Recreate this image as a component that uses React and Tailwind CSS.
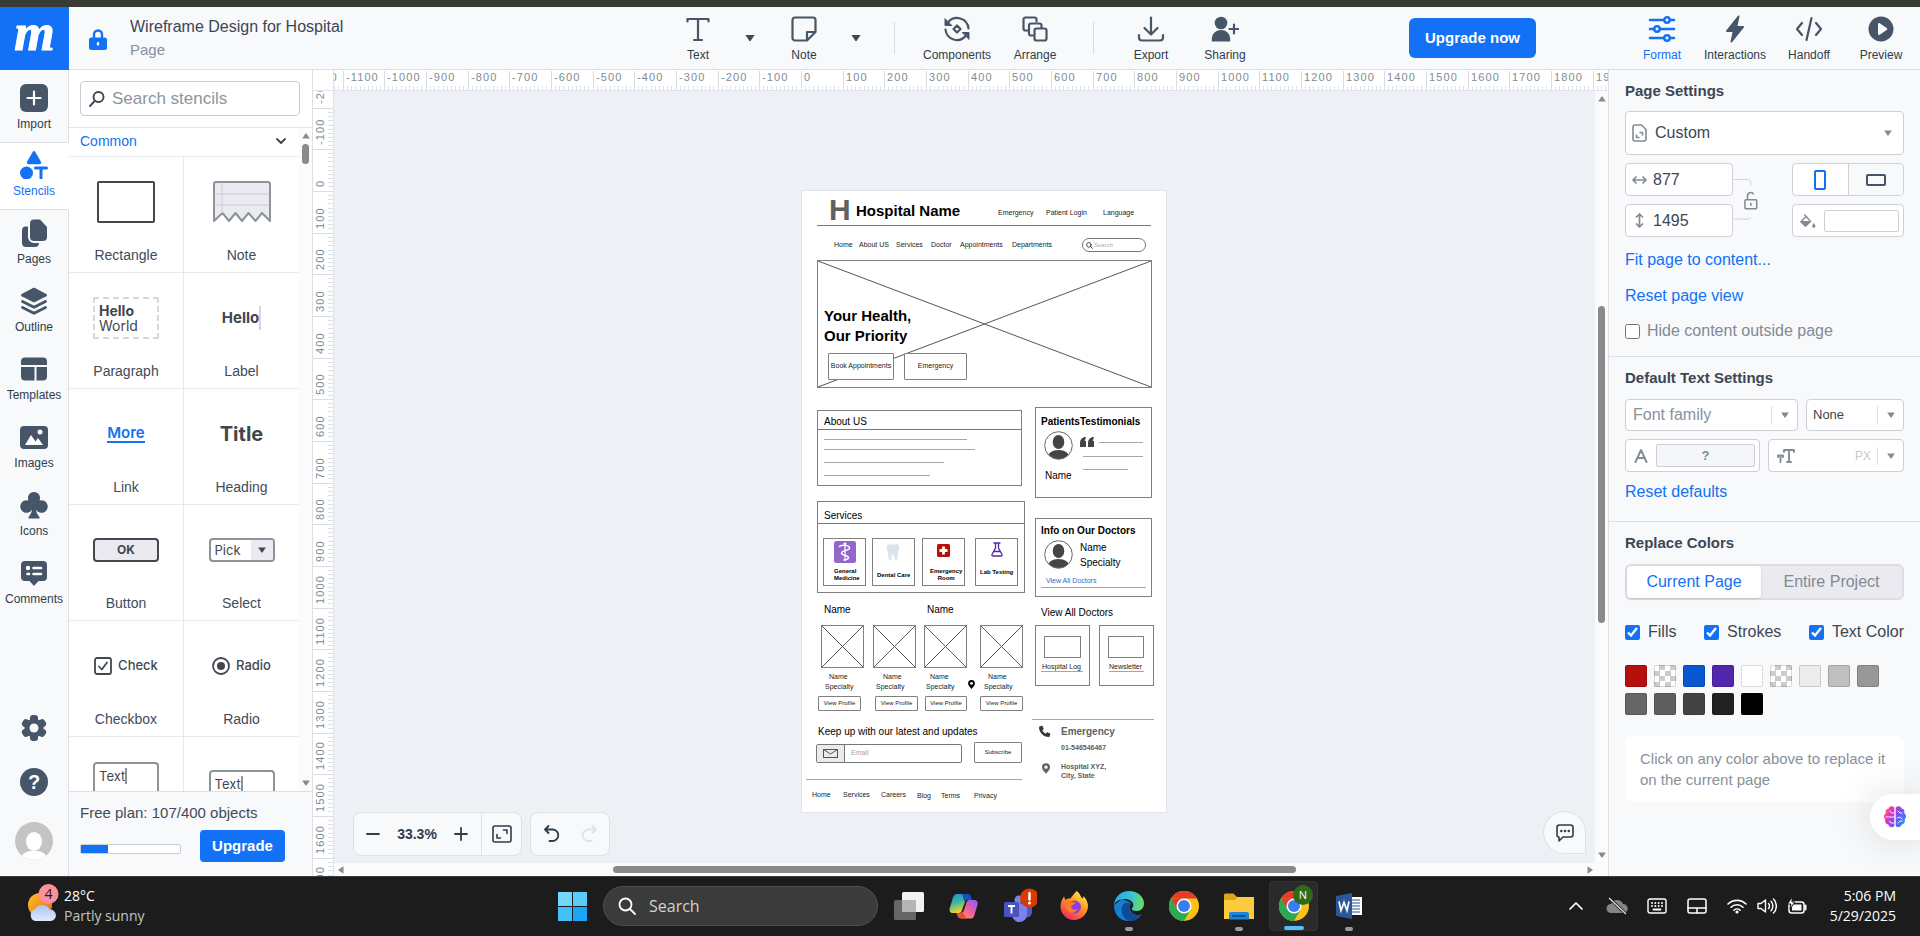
import React from "react";

/* ---------- small icon set ---------- */

const Caret = ({ className = "w-3 h-2 text-[#3f4a58]" }) => (
  <svg viewBox="0 0 12 8" className={className} fill="currentColor" aria-hidden="true">
    <path d="M1.4 1h9.2L6.7 6.8a.8.8 0 0 1-1.4 0z" />
  </svg>
);

const Stroke = ({ children, className = "w-7 h-7", w = 2.2, box = "0 0 28 28" }) => (
  <svg viewBox={box} className={className} fill="none" stroke="currentColor" strokeWidth={w} strokeLinecap="round" strokeLinejoin="round" aria-hidden="true">
    {children}
  </svg>
);

const Solid = ({ children, className = "w-7 h-7", box = "0 0 28 28" }) => (
  <svg viewBox={box} className={className} fill="currentColor" aria-hidden="true">
    {children}
  </svg>
);

const TextIcon = () => (
  <Stroke><path d="M3.5 6.5V4h21v2.500M14 4v21M10 25h8" /></Stroke>
);
const NoteIcon = () => (
  <Stroke><path d="M2.500 5a2.500 2.500 0 0 1 2.500-2.500h18A2.500 2.500 0 0 1 25.500 5v12l-8.500 8.500H5A2.500 2.500 0 0 1 2.500 23zM25.500 17H17v8.500" /></Stroke>
);
const ComponentsIcon = () => (
  <Stroke>
    <path d="M5 7.500A11.500 11.500 0 0 1 25.500 13.500M23 20.500A11.500 11.500 0 0 1 2.500 14.500" />
    <path d="M2 4v6.500h6.500zM26 24v-6.500h-6.500z" fill="currentColor" strokeWidth="1" />
    <path d="m14 10.500 3.500 3.500-3.500 3.500-3.500-3.500z" />
  </Stroke>
);
const ArrangeIcon = () => (
  <Stroke>
    <path d="M6.500 15.500h-2a2 2 0 0 1-2-2v-9a2 2 0 0 1 2-2h9a2 2 0 0 1 2 2v2" />
    <path d="M12 20.500h-2a2 2 0 0 1-2-2v-8a2 2 0 0 1 2-2h8.500a2 2 0 0 1 2 2v2" />
    <rect x="13.500" y="13.500" width="12" height="12" rx="2" />
  </Stroke>
);
const ExportIcon = () => (
  <Stroke><path d="M14 2.500V19M7.500 13l6.500 6.500 6.500-6.500M2 20v2.500a3 3 0 0 0 3 3h18a3 3 0 0 0 3-3V20" /></Stroke>
);
const SharingIcon = () => (
  <svg viewBox="0 0 28 28" className="w-7 h-7" aria-hidden="true">
    <circle cx="10" cy="8" r="6.300" fill="currentColor" />
    <path d="M.800 26.500v-3a9.200 8.500 0 0 1 18.400 0v3z" fill="currentColor" />
    <path d="M23 9.500v9M18.500 14h9" stroke="currentColor" strokeWidth="2.200" strokeLinecap="round" />
  </svg>
);
const FormatIcon = () => (
  <svg viewBox="0 0 28 28" className="w-7 h-7" fill="#fff" stroke="currentColor" strokeWidth="2.500" strokeLinecap="round" aria-hidden="true">
    <path d="M2 5h24M2 14h24M2 23h24" />
    <circle cx="19" cy="5" r="2.700" /><circle cx="9" cy="14" r="2.700" /><circle cx="19" cy="23" r="2.700" />
  </svg>
);
const BoltIcon = () => (
  <Solid><path d="M16.800 1 5.200 15.600c-.5.700-.1 1.400.7 1.400h5.600L9.600 26.400c-.2 1.100.900 1.500 1.600.6l11.600-14.600c.5-.7.100-1.400-.7-1.400h-5.600l2-9.400c.2-1.100-.9-1.500-1.700-.6z" /></Solid>
);
const CodeIcon = () => (
  <Stroke><path d="m7 8-5 6 5 6M21 8l5 6-5 6M16.500 3l-5 22" /></Stroke>
);
const PlayIcon = () => (
  <Solid><path fillRule="evenodd" d="M14 1.500a12.500 12.500 0 1 0 0 25 12.500 12.500 0 0 0 0-25zM11 9.200c0-.9 1-1.400 1.700-.9l7 4.800c.7.500.7 1.300 0 1.800l-7 4.800c-.7.500-1.700 0-1.700-.9z" /></Solid>
);

const ImportIcon = () => (
  <svg viewBox="0 0 28 28" className="w-7 h-7" aria-hidden="true">
    <rect width="28" height="28" rx="6" fill="currentColor" />
    <path d="M14 7.500v13M7.500 14h13" stroke="#fff" strokeWidth="2.200" strokeLinecap="round" />
  </svg>
);
const StencilsIcon = () => (
  <Solid>
    <path d="M12.800.8 7.200 10.600c-.8 1.500-.1 2.600 1.300 2.600h11c1.400 0 2.100-1.100 1.300-2.600L15.200.8c-.6-1-1.800-1-2.400 0z" />
    <circle cx="6.500" cy="22" r="6.500" />
    <path d="M15.500 15.500h11a1.400 1.400 0 0 1 0 3h-4v8.500a1.500 1.500 0 0 1-3 0v-8.500h-4a1.400 1.400 0 0 1 0-3z" />
  </Solid>
);
const PagesIcon = () => (
  <Solid>
    <path d="M14 .5h6L27 8v10a4 4 0 0 1-4 4h-9a4 4 0 0 1-4-4V4.500a4 4 0 0 1 4-4z" />
    <path d="M8 7.500H6a4 4 0 0 0-4 4V24a4 4 0 0 0 4 4h9a4 4 0 0 0 4-4h-5a6 6 0 0 1-6-6z" />
  </Solid>
);
const OutlineIcon = () => (
  <svg viewBox="0 0 28 28" className="w-7 h-7" fill="currentColor" aria-hidden="true">
    <path d="M13 1 1.700 7c-.9.500-.9 1.800 0 2.300L13 15c.7.300 1.300.300 2 0l11.300-5.700c.9-.5.900-1.800 0-2.300L15 1c-.7-.3-1.300-.3-2 0z" />
    <path d="M2.500 14.500 14 20.300l11.500-5.800M2.500 20.500 14 26.300l11.500-5.800" fill="none" stroke="currentColor" strokeWidth="2.800" strokeLinecap="round" strokeLinejoin="round" />
  </svg>
);
const TemplatesIcon = () => (
  <Solid>
    <path d="M5 2.500h18a4 4 0 0 1 4 4V10H1V6.500a4 4 0 0 1 4-4z" />
    <path d="M1 12h13.500v13.500H5a4 4 0 0 1-4-4zM16.500 12H27v9.500a4 4 0 0 1-4 4h-6.500z" />
  </Solid>
);
const ImagesIcon = () => (
  <svg viewBox="0 0 28 28" className="w-7 h-7" aria-hidden="true">
    <rect y="3" width="28" height="23" rx="4" fill="currentColor" />
    <path d="M5 22 11 12l4.500 6.500 2.500-3.500L23 22z" fill="#fff" />
    <circle cx="20" cy="9" r="2.500" fill="#fff" />
  </svg>
);
const ClubIcon = () => (
  <Solid>
    <path d="M14 1a6 6 0 0 1 5.500 8.500A6.300 6.300 0 1 1 16 18.700c.400 3 1.800 5.300 3.500 7.600.4.600.1 1.200-.6 1.200H9.100c-.7 0-1-.6-.6-1.200 1.700-2.300 3.100-4.600 3.500-7.600A6.300 6.300 0 1 1 8.500 9.500 6 6 0 0 1 14 1z" />
  </Solid>
);
const CommentsIcon = () => (
  <svg viewBox="0 0 28 28" className="w-7 h-7" aria-hidden="true">
    <path d="M5 2h18a4 4 0 0 1 4 4v12a4 4 0 0 1-4 4h-4.500L14 27l-4.500-5H5a4 4 0 0 1-4-4V6a4 4 0 0 1 4-4z" fill="currentColor" />
    <circle cx="8" cy="9" r="2.200" fill="#fff" />
    <path d="M13.500 9H21M13.500 15H21M7.500 15h1.500" stroke="#fff" strokeWidth="2.600" strokeLinecap="round" />
  </svg>
);

/* ---------- header ---------- */

const Tool = ({ icon, label, width, active }) => (
  <button className={`${width} flex flex-col items-center gap-1 pt-2 ${active ? "text-[#1271f5]" : "text-[#465567]"}`}>
    {icon}
    <span className={`text-xs leading-4 ${active ? "" : "text-[#303c4b]"}`}>{label}</span>
  </button>
);

const Header = () => (
  <header className="flex h-[63px] shrink-0 border-b border-[#dcdfe5] bg-[#f7f9fb]">
    <div className="flex w-[664px] shrink-0">
      <a href="#home" aria-label="Home" className="flex h-[63px] w-[69px] items-center justify-center bg-[#1271f5] pb-3 text-white">
        <span className="font-['Liberation_Serif',serif] text-[52px] font-bold italic leading-none [-webkit-text-stroke:1px_white]">m</span>
      </a>
      <button aria-label="Locked" className="ml-5 mt-1 flex items-center text-[#1271f5]">
        <svg viewBox="0 0 18 22" className="h-[22px] w-[18px]" aria-hidden="true">
          <path d="M5 9V5.500a4 4 0 0 1 8 0V9" fill="none" stroke="currentColor" strokeWidth="2.400" />
          <rect y="8.500" width="18" height="12.500" rx="2.500" fill="currentColor" />
          <rect x="7.800" y="13" width="2.400" height="3.600" rx="1" fill="#fff" />
        </svg>
      </button>
      <div className="ml-[23px] flex flex-col pt-[10px]">
        <h1 className="text-base leading-5 text-[#3d4653]">Wireframe Design for Hospital</h1>
        <p className="mt-[3px] text-[15px] leading-5 text-[#87919c]">Page</p>
      </div>
    </div>
    <nav className="flex shrink-0">
      <Tool icon={<TextIcon />} label="Text" width="w-[68px]" />
      <button aria-label="Text options" className="flex w-9 items-center justify-center"><Caret /></button>
      <Tool icon={<NoteIcon />} label="Note" width="w-[72px]" />
      <button aria-label="Note options" className="flex w-8 items-center justify-center"><Caret /></button>
      <div className="flex w-11 items-center justify-center"><span className="h-8 w-px bg-[#dadde3]" /></div>
      <Tool icon={<ComponentsIcon />} label="Components" width="w-[82px]" />
      <Tool icon={<ArrangeIcon />} label="Arrange" width="w-[74px]" />
      <div className="flex w-[42px] items-center justify-center"><span className="h-8 w-px bg-[#dadde3]" /></div>
      <Tool icon={<ExportIcon />} label="Export" width="w-[74px]" />
      <Tool icon={<SharingIcon />} label="Sharing" width="w-[74px]" />
    </nav>
    <div className="ml-auto flex shrink-0 pr-1">
      <button className="mr-[90px] mt-[11px] h-10 w-[127px] rounded-md bg-[#1271f5] text-[15px] font-bold text-white">Upgrade now</button>
      <Tool icon={<FormatIcon />} label="Format" width="w-[72px]" active />
      <Tool icon={<BoltIcon />} label="Interactions" width="w-[74px]" />
      <Tool icon={<CodeIcon />} label="Handoff" width="w-[74px]" />
      <Tool icon={<PlayIcon />} label="Preview" width="w-[70px]" />
    </div>
  </header>
);

/* ---------- left navigation ---------- */

const navItems = [
  ["Pages", <PagesIcon />],
  ["Outline", <OutlineIcon />],
  ["Templates", <TemplatesIcon />],
  ["Images", <ImagesIcon />],
  ["Icons", <ClubIcon />],
  ["Comments", <CommentsIcon />],
];

const LeftNav = () => (
  <nav className="flex w-[69px] shrink-0 flex-col bg-[#f7f9fb] text-[#465567]">
    <button className="flex h-[73px] flex-col items-center gap-1 border-b border-r border-[#dcdfe5] pt-[14px]">
      <ImportIcon />
      <span className="text-xs leading-4 text-[#303c4b]">Import</span>
    </button>
    <button className="flex h-[67px] flex-col items-center gap-1 border-b border-r border-b-[#dcdfe5] border-r-white bg-white pt-2 text-[#1271f5]">
      <StencilsIcon />
      <span className="text-xs leading-4">Stencils</span>
    </button>
    <div className="flex flex-1 flex-col border-r border-[#dcdfe5]">
      {navItems.map(([label, icon]) => (
        <button key={label} className="flex h-[68px] flex-col items-center gap-1 pt-[9px]">
          {icon}
          <span className="text-xs leading-4 text-[#303c4b]">{label}</span>
        </button>
      ))}
      <div className="mt-auto flex flex-col items-center gap-[26px] pb-4">
        <button aria-label="Settings">
          <svg viewBox="0 0 26 28" className="h-7 w-[26px]" aria-hidden="true">
            <g fill="currentColor">
              <rect x="9" y="1" width="8" height="26" rx="3" />
              <rect x="9" y="1" width="8" height="26" rx="3" transform="rotate(60 13 14)" />
              <rect x="9" y="1" width="8" height="26" rx="3" transform="rotate(120 13 14)" />
              <circle cx="13" cy="14" r="9.500" />
            </g>
            <circle cx="13" cy="14" r="4.500" fill="#f7f9fb" />
          </svg>
        </button>
        <button aria-label="Help" className="flex h-7 w-7 items-center justify-center rounded-full bg-[#465567] text-xl font-bold leading-none text-white">?</button>
        <button aria-label="Account">
          <svg viewBox="0 0 38 38" className="h-[38px] w-[38px]" aria-hidden="true">
            <clipPath id="acc"><circle cx="19" cy="19" r="19" /></clipPath>
            <g clipPath="url(#acc)">
              <rect width="38" height="38" fill="#c4c4c4" />
              <ellipse cx="19" cy="19.500" rx="8" ry="9.500" fill="#fff" />
              <path d="M5 38c2-7 7-9 11-9h6c4 0 9 2 11 9z" fill="#fff" />
            </g>
          </svg>
        </button>
      </div>
    </div>
  </nav>
);

/* ---------- stencil panel ---------- */

const ui = "font-['Inter',sans-serif] text-[#42474e]";

const stencils = [
  ["Rectangle", <div className="h-[42px] w-[58px] rounded-xs border-2 border-[#45474c]" />],
  ["Note",
    <svg viewBox="0 0 58 42" className="h-[42px] w-[58px]" aria-hidden="true">
      <path d="M1 40V3a2 2 0 0 1 2-2h52a2 2 0 0 1 2 2v37l-8-8-6.500 8-7-8-6.500 8-6.500-8-6.500 8-6.500-8z" fill="#ebeaf0" stroke="#8b949b" strokeWidth="2" strokeLinejoin="round" />
      <path d="M2 13h54M2 24h54M9 2v30" stroke="#d4d6db" strokeWidth="1.500" />
    </svg>],
  ["Paragraph",
    <div className={`${ui} h-[42px] w-[66px] rounded-xs border-2 border-dashed border-[#d6d8de] pl-1 pt-1 text-sm leading-[15px]`}>
      <b className="font-bold">Hello</b><br />World
    </div>],
  ["Label", <div className={`${ui} border-r-2 border-[#d6d8de] text-[15px] font-bold leading-6`}>Hello</div>],
  ["Link", <div className="border-b-2 border-[#1271f5] font-['Inter',sans-serif] text-[15px] font-semibold leading-4 text-[#1271f5]">More</div>],
  ["Heading", <div className={`${ui} text-xl font-bold leading-6`}>Title</div>],
  ["Button", <div className={`${ui} flex h-6 w-[66px] items-center justify-center rounded border-2 border-[#45474c] bg-[#ebeaf0] text-xs font-bold`}>OK</div>],
  ["Select",
    <div className={`${ui} flex h-6 w-[66px] items-stretch overflow-hidden rounded border-2 border-[#8b949b] text-[13px]`}>
      <span className="flex-1 pl-1 leading-5">Pick</span>
      <span className="flex w-[22px] items-center justify-center bg-[#ebeaf0]"><Caret className="h-2 w-[10px] text-[#42474e]" /></span>
    </div>],
  ["Checkbox",
    <div className={`${ui} flex items-center gap-1.5 text-[13px] font-medium`}>
      <Stroke className="h-[18px] w-[18px]" box="0 0 18 18" w={1.8}><rect x="1" y="1" width="16" height="16" rx="2" /><path d="m5 9.500 2.800 3L13 5.500" /></Stroke>Check
    </div>],
  ["Radio",
    <div className={`${ui} flex items-center gap-1.5 text-[13px] font-medium`}>
      <svg viewBox="0 0 18 18" className="h-[18px] w-[18px]" aria-hidden="true"><circle cx="9" cy="9" r="8" fill="none" stroke="currentColor" strokeWidth="1.800" /><circle cx="9" cy="9" r="4" fill="currentColor" /></svg>Radio
    </div>],
];

const textBox = `${ui} w-[66px] rounded-t border-2 border-b-0 border-[#8b949b] pl-1 pt-1 text-[13px] leading-4`;
const typed = "inline-block border-r-2 border-[#8b949b]";

const StencilPanel = () => (
  <aside className="flex w-[244px] shrink-0 flex-col border-r border-[#dcdfe5] bg-white">
    <div className="h-[58px] shrink-0 border-b border-[#e4e6eb] pl-[11px] pr-3 pt-[11px]">
      <label className="flex h-[35px] items-center rounded border border-[#c9cdd3] pl-2">
        <Stroke className="h-4 w-4 shrink-0 text-[#3d4653]" box="0 0 16 16" w={1.9}><circle cx="9.500" cy="6" r="5" /><path d="M5.700 9.800 1 15" /></Stroke>
        <input type="search" aria-label="Search stencils" placeholder="Search stencils" className="ml-[7px] w-full bg-transparent text-[17px] leading-6 outline-none placeholder:text-[#8c959e]" />
      </label>
    </div>
    <div className="flex min-h-0 flex-1 overflow-hidden">
      <div className="flex min-w-0 flex-1 flex-col">
        <button className="flex h-[29px] w-full shrink-0 items-center justify-between border-b border-[#e8e8ee] pb-0.5 pl-[11px] pr-3 text-sm text-[#1271f5]">
          Common
          <Stroke className="h-3 w-3 text-[#3d4653]" box="0 0 12 12" w={1.8}><path d="m2 4 4 4 4-4" /></Stroke>
        </button>
        <div className="grid shrink-0 grid-cols-2">
          {stencils.map(([label, preview], i) => (
            <div key={label} className={`flex h-[116px] flex-col items-center border-b border-[#e8e8ee] ${i % 2 ? "" : "border-r"}`}>
              <div className="flex h-[90px] items-center justify-center">{preview}</div>
              <span className="text-sm leading-4 text-[#3f4b5a]">{label}</span>
            </div>
          ))}
        </div>
        <div className="grid min-h-0 flex-1 grid-cols-2">
          <div className="flex justify-center border-r border-[#e8e8ee] pt-[25px]"><div className={textBox}><span className={typed}>Text</span></div></div>
          <div className="flex justify-center pt-[33px]"><div className={textBox}><span className={typed}>Text</span></div></div>
        </div>
      </div>
      <div className="flex w-[13px] shrink-0 flex-col items-center bg-[#fbfbfc] py-1 text-[#8a8a8a]">
        <Caret className="h-2 w-[10px] rotate-180" />
        <div className="mt-1 h-5 w-[7px] rounded-full bg-[#8a8a8a]" />
        <Caret className="mt-auto h-2 w-[10px]" />
      </div>
    </div>
    <div className="h-[85px] shrink-0 border-t border-[#dcdfe5] bg-[#f7f9fb] pl-[11px] pt-[11px]">
      <p className="text-[15px] leading-5 text-[#3f4b5a]">Free plan: 107/400 objects</p>
      <div className="mt-[7px] flex items-center gap-[19px]">
        <div className="mt-1.5 h-[10px] w-[101px] rounded-xs border border-[#c9cdd3] bg-white"><div className="h-full w-[27%] bg-[#1271f5]" /></div>
        <button className="h-8 w-[85px] rounded bg-[#1271f5] text-[15px] font-bold text-white">Upgrade</button>
      </div>
    </div>
  </aside>
);

/* ---------- rulers ---------- */

const STEP = 41.66;
const marks = Array.from({ length: 36 }, (_, i) => i - 13);

const HRuler = () => (
  <svg className="h-5 w-full" aria-hidden="true">
    {marks.map((n) => {
      const x = Math.round(467 + n * STEP);
      return (
        <g key={n}>
          <rect x={x} y="1" width="1" height="19" fill="#d9dce3" />
          {[1, 2, 3, 4, 5, 6, 7, 8, 9].map((k) => (
            <rect key={k} x={Math.round(x + (k * STEP) / 10)} y="16" width="1" height="4" fill="#dfe1e8" />
          ))}
          <text x={x + 3} y="11" className="fill-[#818b94] text-[11px] tracking-widest">{n * 100}</text>
        </g>
      );
    })}
  </svg>
);

const VRuler = () => (
  <svg className="h-full w-5" aria-hidden="true">
    {marks.filter((n) => n > -3 && n < 18).map((n) => {
      const y = Math.round(100 + n * STEP);
      return (
        <g key={n}>
          <rect x="0" y={y} width="20" height="1" fill="#d9dce3" />
          {[1, 2, 3, 4, 5, 6, 7, 8, 9].map((k) => (
            <rect key={k} x="15" y={Math.round(y + (k * STEP) / 10)} width="5" height="1" fill="#dfe1e8" />
          ))}
          <text transform={`translate(11 ${y - 4}) rotate(-90)`} className="fill-[#818b94] text-[11px] tracking-widest">{n * 100}</text>
        </g>
      );
    })}
  </svg>
);

/* ---------- hospital page ---------- */

const T = ({ at, children, className = "text-[7px] leading-[10px] text-[#222]" }) => (
  <span className={`absolute whitespace-nowrap ${at} ${className}`}>{children}</span>
);
const H10 = "text-[10px] leading-3 text-black";
const B10 = "text-[10px] leading-3 font-bold text-black";
const Box = ({ at, children }) => <div className={`absolute border border-[#808080] ${at}`}>{children}</div>;
const Rule = ({ at }) => <div className={`absolute h-px bg-[#a6a6a6] ${at}`} />;

const Cross = ({ at }) => (
  <Box at={at}>
    <svg className="h-full w-full" viewBox="0 0 100 100" preserveAspectRatio="none" aria-hidden="true">
      <path d="M0 0 100 100M100 0 0 100" stroke="#555" vectorEffect="non-scaling-stroke" />
    </svg>
  </Box>
);

const Person = ({ at }) => (
  <svg viewBox="0 0 29 29" className={`absolute h-[29px] w-[29px] ${at}`} aria-hidden="true">
    <clipPath id="person"><circle cx="14.500" cy="14.500" r="13.500" /></clipPath>
    <g clipPath="url(#person)" fill="#454545">
      <ellipse cx="14.500" cy="11" rx="5.800" ry="7" />
      <path d="M3 29c0-7 5-10 11.500-10S26 22 26 29z" />
    </g>
    <circle cx="14.500" cy="14.500" r="13.800" fill="none" stroke="#666" strokeWidth="1" />
  </svg>
);

const Pin = ({ at }) => (
  <svg viewBox="0 0 12 16" className={`absolute ${at}`} fill="currentColor" aria-hidden="true">
    <path fillRule="evenodd" d="M6 0a6 6 0 0 0-6 6c0 3.500 3 6 6 10 3-4 6-6.500 6-10a6 6 0 0 0-6-6zm0 3.500a2.500 2.500 0 1 1 0 5 2.500 2.500 0 0 1 0-5z" />
  </svg>
);

const PageButton = ({ at, children }) => (
  <button className={`absolute flex items-center justify-center whitespace-nowrap rounded-[1px] border border-[#808080] bg-white text-[#222] ${at}`}>{children}</button>
);

const HospitalPage = () => (
  <article className="absolute left-[467px] top-[99px] h-[623px] w-[366px] border border-[#e0e3e9] bg-white">
    <div className="absolute -left-px -top-px h-[623px] w-[366px]">
      <T at="left-[28px] top-1" className="text-[30px] font-bold leading-8 text-[#606060]">H</T>
      <T at="left-[55px] top-[11px]" className="text-[15px] font-bold leading-5 text-black">Hospital Name</T>
      <T at="left-[197px] top-[18px]">Emergency</T>
      <T at="left-[245px] top-[18px]">Patient Login</T>
      <T at="left-[302px] top-[18px]">Language</T>
      <div className="absolute left-4 top-[35px] h-px w-[334px] bg-[#777]" />

      <T at="left-[33px] top-[50px]">Home</T>
      <T at="left-[58px] top-[50px]">About US</T>
      <T at="left-[95px] top-[50px]">Services</T>
      <T at="left-[130px] top-[50px]">Doctor</T>
      <T at="left-[159px] top-[50px]">Appointments</T>
      <T at="left-[211px] top-[50px]">Departments</T>
      <label className="absolute left-[281px] top-[48px] flex h-[14px] w-16 items-center rounded-full border border-[#777] pl-[3px]">
        <Stroke className="h-[7px] w-[7px] shrink-0 text-[#333]" box="0 0 8 8" w={1}><circle cx="3.300" cy="3.300" r="2.600" /><path d="m5.200 5.200 2.200 2.200" /></Stroke>
        <input aria-label="Search hospital" placeholder="Search" className="ml-px w-10 bg-transparent text-[6px] leading-[10px] outline-none placeholder:text-[#b0b0b0]" />
      </label>

      <Cross at="left-4 top-[70px] h-[128px] w-[335px]" />
      <h2 className="absolute left-[23px] top-[116px] text-[15px] font-bold leading-5 text-black">Your Health,<br />Our Priority</h2>
      <PageButton at="left-[27px] top-[163px] h-[27px] w-[66px] text-[7px]">Book Appointments</PageButton>
      <PageButton at="left-[103px] top-[163px] h-[27px] w-[63px] text-[7px]">Emergency</PageButton>

      <Box at="left-4 top-[220px] h-[76px] w-[205px]" />
      <T at="left-[23px] top-[226px]" className={H10}>About US</T>
      <div className="absolute left-4 top-[239px] h-px w-[205px] bg-[#777]" />
      <Rule at="left-[23px] top-[249px] w-[143px]" />
      <Rule at="left-[23px] top-[259px] w-[151px]" />
      <Rule at="left-[23px] top-[272px] w-[120px]" />
      <Rule at="left-[23px] top-[285px] w-[106px]" />

      <Box at="left-[234px] top-[217px] h-[91px] w-[117px]" />
      <T at="left-[240px] top-[226px]" className={B10}>PatientsTestimonials</T>
      <Person at="left-[243px] top-[241px]" />
      <svg viewBox="0 0 14 10" className="absolute left-[279px] top-[247px] h-[10px] w-[14px]" fill="#454545" aria-hidden="true">
        <path d="M4.500 0H6L4.800 4H6v6H0V5.500C0 3 2 .5 4.500 0zM12.500 0H14l-1.200 4H14v6H8V5.500C8 3 10 .5 12.500 0z" />
      </svg>
      <Rule at="left-[298px] top-[252px] w-11" />
      <Rule at="left-[282px] top-[266px] w-[60px]" />
      <Rule at="left-[282px] top-[279px] w-[45px]" />
      <T at="left-[244px] top-[280px]" className={H10}>Name</T>

      <Box at="left-4 top-[311px] h-[92px] w-[208px]" />
      <T at="left-[23px] top-[320px]" className={H10}>Services</T>
      <div className="absolute left-4 top-[333px] h-px w-[208px] bg-[#777]" />
      <Box at="left-[22px] top-[348px] h-12 w-[43px]" />
      <Box at="left-[71px] top-[348px] h-12 w-[43px]" />
      <Box at="left-[121px] top-[348px] h-12 w-[43px]" />
      <Box at="left-[174px] top-[348px] h-12 w-[43px]" />
      <svg viewBox="0 0 22 22" className="absolute left-[33px] top-[351px] h-[22px] w-[22px]" aria-hidden="true">
        <rect width="22" height="22" rx="2.500" fill="#9466cc" />
        <path d="M11 3.500V20" stroke="#fff" strokeWidth="1.200" />
        <circle cx="11" cy="2.800" r="1.400" fill="#fff" />
        <path d="M5.500 5.500C7 3.500 15.500 4 15.500 7S7.500 9 7.500 12s7 2 7 4.500S11 18.500 10 19" fill="none" stroke="#fff" strokeWidth="1.500" strokeLinecap="round" />
      </svg>
      <svg viewBox="0 0 14 18" className="absolute left-[85px] top-[354px] h-[17px] w-[14px]" fill="#dbe3eb" aria-hidden="true">
        <path d="M.5 2C1.500-.3 5 .3 7 1c2-.7 5.500-1.300 6.500 1 .8 2.500-1 5-1.300 8-.2 3-.5 7.500-2 7.500S8.700 11 7 11s-1.700 6.500-3.200 6.500-1.800-4.500-2-7.500C1.500 7-.3 4.500.5 2z" />
      </svg>
      <svg viewBox="0 0 13 13" className="absolute left-[136px] top-[354px] h-[13px] w-[13px]" aria-hidden="true">
        <rect width="13" height="13" rx="1.500" fill="#b5100c" />
        <path d="M6.500 2.500v8M2.500 6.500h8" stroke="#fff" strokeWidth="2.800" />
      </svg>
      <svg viewBox="0 0 12 15" className="absolute left-[190px] top-[352px] h-[15px] w-3" fill="none" stroke="#5227ad" strokeWidth="1.300" strokeLinecap="round" aria-hidden="true">
        <path d="M3 1h6M4.500 1v5L1 12.500c-.3.900.2 1.500 1 1.500h8c.8 0 1.300-.6 1-1.500L7.500 6V1M3 9.500h6" />
      </svg>
      <T at="left-[33px] top-[378px]" className="text-[6px] font-bold leading-[7px] text-black">General<br />Medicine</T>
      <T at="left-[76px] top-[382px]" className="text-[6px] font-bold leading-[7px] text-black">Dental Care</T>
      <T at="left-[129px] top-[378px]" className="text-center text-[6px] font-bold leading-[7px] text-black">Emergency<br />Room</T>
      <T at="left-[179px] top-[379px]" className="text-[6px] font-bold leading-[7px] text-black">Lab Testing</T>

      <Box at="left-[234px] top-[328px] h-[79px] w-[117px]" />
      <T at="left-[240px] top-[335px]" className={B10}>Info on Our Doctors</T>
      <Person at="left-[243px] top-[350px]" />
      <T at="left-[279px] top-[352px]" className={H10}>Name</T>
      <T at="left-[279px] top-[367px]" className={H10}>Specialty</T>
      <a href="#doctors" className="absolute left-[245px] top-[386px] whitespace-nowrap text-[7px] leading-[10px] text-[#2f6bc9]">View All Doctors</a>
      <Rule at="left-[240px] top-[397px] w-[105px]" />

      <T at="left-[23px] top-[414px]" className={H10}>Name</T>
      <T at="left-[126px] top-[414px]" className={H10}>Name</T>
      <T at="left-[240px] top-[417px]" className={H10}>View All Doctors</T>

      <Cross at="left-5 top-[435px] h-[43px] w-[43px]" />
      <Cross at="left-[72px] top-[435px] h-[43px] w-[43px]" />
      <Cross at="left-[123px] top-[435px] h-[43px] w-[43px]" />
      <Cross at="left-[179px] top-[435px] h-[43px] w-[43px]" />
      <T at="left-[28px] top-[482px]">Name</T>
      <T at="left-[24px] top-[492px]">Specialty</T>
      <T at="left-[82px] top-[482px]">Name</T>
      <T at="left-[75px] top-[492px]">Specialty</T>
      <T at="left-[129px] top-[482px]">Name</T>
      <T at="left-[125px] top-[492px]">Specialty</T>
      <T at="left-[187px] top-[482px]">Name</T>
      <T at="left-[183px] top-[492px]">Specialty</T>
      <Pin at="left-[167px] top-[490px] h-[9px] w-[7px] text-black" />
      <PageButton at="left-[17px] top-[506px] h-[15px] w-[43px] text-[6px]">View Profile</PageButton>
      <PageButton at="left-[74px] top-[506px] h-[15px] w-[43px] text-[6px]">View Profile</PageButton>
      <PageButton at="left-[124px] top-[506px] h-[15px] w-[42px] text-[6px]">View Profile</PageButton>
      <PageButton at="left-[179px] top-[506px] h-[15px] w-[43px] text-[6px]">View Profile</PageButton>

      <Box at="left-[234px] top-[435px] h-[61px] w-[55px]" />
      <Box at="left-[298px] top-[435px] h-[61px] w-[55px]" />
      <Box at="left-[243px] top-[446px] h-[22px] w-[37px]" />
      <Box at="left-[307px] top-[446px] h-[22px] w-[36px]" />
      <T at="left-[241px] top-[472px]">Hospital Log</T>
      <T at="left-[308px] top-[472px]">Newsletter</T>
      <Rule at="left-[240px] top-[481px] w-[42px]" />
      <Rule at="left-[308px] top-[481px] w-[35px]" />

      <T at="left-[17px] top-[536px]" className={H10}>Keep up with our latest and updates</T>
      <label className="absolute left-[15px] top-[554px] flex h-[19px] w-[146px] overflow-hidden rounded-xs border border-[#777] bg-white">
        <span className="flex w-7 shrink-0 items-center justify-center border-r border-[#777] bg-[#ebebeb]">
          <svg viewBox="0 0 15 9" className="h-[9px] w-[15px]" fill="none" stroke="#555" aria-hidden="true"><rect x=".5" y=".5" width="14" height="8" /><path d="m.5.5 7 4.500 7-4.500" /></svg>
        </span>
        <input aria-label="Email" placeholder="Email" className="w-24 bg-transparent pl-1.5 text-[7px] outline-none placeholder:text-[#a3a3a3]" />
      </label>
      <PageButton at="left-[173px] top-[552px] h-[21px] w-[48px] text-[6px]">Subscribe</PageButton>

      <Rule at="left-[231px] top-[529px] w-[122px]" />
      <svg viewBox="0 0 24 24" className="absolute left-[237px] top-[535px] h-[13px] w-[13px]" fill="#33373c" aria-hidden="true">
        <path d="M6.500 1.500 2 3C1 13 11 23 21 22l1.700-4.700c.2-.6-.1-1.200-.6-1.500l-4.500-2.200c-.5-.2-1.200-.1-1.500.3l-1.800 2.200C11.500 14.800 9.200 12.500 8 9.800L10 8c.5-.4.6-1 .4-1.500L8.300 2C8 1.500 7.200 1.300 6.500 1.500z" />
      </svg>
      <T at="left-[260px] top-[536px]" className="text-[10px] font-bold leading-3 text-[#606060]">Emergency</T>
      <T at="left-[260px] top-[553px]" className="text-[7px] font-bold leading-[10px] text-[#606060]">01-546546467</T>
      <Pin at="left-[241px] top-[573px] h-[11px] w-2 text-[#606060]" />
      <T at="left-[260px] top-[572px]" className="text-[7px] font-bold leading-[9px] text-[#606060]">Hospital XYZ,<br />City, State</T>

      <Rule at="left-[5px] top-[589px] w-[216px]" />
      <T at="left-[11px] top-[600px]">Home</T>
      <T at="left-[42px] top-[600px]">Services</T>
      <T at="left-[80px] top-[600px]">Careers</T>
      <T at="left-[116px] top-[601px]">Blog</T>
      <T at="left-[140px] top-[601px]">Terms</T>
      <T at="left-[173px] top-[601px]">Privacy</T>
    </div>
  </article>
);

/* ---------- canvas ---------- */

const floating = "absolute flex items-center border border-[#dde1e8] bg-[#f7f9fb] text-[#303c4b]";

const Canvas = () => (
  <main className="flex min-w-0 flex-1 flex-col bg-white">
    <div className="flex h-[21px] shrink-0 overflow-hidden border-b border-[#e1e3ea]">
      <div className="w-[21px] shrink-0 border-r border-[#e1e3ea]" />
      <div className="min-w-0 flex-1"><HRuler /></div>
    </div>
    <div className="flex min-h-0 flex-1">
      <div className="w-[21px] shrink-0 overflow-hidden border-r border-[#e1e3ea]"><VRuler /></div>
      <div className="flex min-w-0 flex-1 flex-col">
        <div className="flex min-h-0 flex-1">
          <div className="relative min-w-0 flex-1 overflow-hidden bg-[#edf1f6]">
            <HospitalPage />
            <div className={`${floating} bottom-[7px] left-[19px] h-[44px] w-[169px] rounded-lg`}>
              <button aria-label="Zoom out" className="flex w-[38px] justify-center"><Stroke className="h-[14px] w-[14px]" box="0 0 14 14" w={1.800}><path d="M1 7h12" /></Stroke></button>
              <span className="w-[50px] text-center text-sm font-bold">33.3%</span>
              <button aria-label="Zoom in" className="flex w-[38px] justify-center"><Stroke className="h-[14px] w-[14px]" box="0 0 14 14" w={1.800}><path d="M1 7h12M7 1v12" /></Stroke></button>
              <button aria-label="Fit to screen" className="ml-auto flex h-full w-10 items-center justify-center border-l border-[#dde1e8]">
                <Stroke className="h-5 w-5" box="0 0 20 20" w={1.600}><rect x="1" y="2" width="18" height="16" rx="2" /><path d="M11.500 6H15v3.500M8.500 14H5v-3.500" /></Stroke>
              </button>
            </div>
            <div className={`${floating} bottom-[7px] left-[196px] h-[44px] w-20 rounded-lg`}>
              <button aria-label="Undo" className="flex w-10 justify-center"><Stroke className="h-5 w-5" box="0 0 20 20" w={1.800}><path d="M7.500 2 4 5.500 7.500 9M4 5.500h7.500a5.700 5.700 0 0 1 0 11.500H8.500" /></Stroke></button>
              <button aria-label="Redo" className="flex w-10 justify-center text-[#dfe3e8]"><Stroke className="h-5 w-5" box="0 0 20 20" w={1.800}><path d="M12.500 2 16 5.500 12.500 9M16 5.500H8.500a5.700 5.700 0 0 0 0 11.500h3" /></Stroke></button>
            </div>
            <button aria-label="Chat" className={`${floating} bottom-[9px] right-[9px] h-[43px] w-[43px] justify-center rounded-t-full rounded-bl-full rounded-br`}>
              <Stroke className="h-5 w-5" box="0 0 20 20" w={1.600}><path d="M2 4.500A2.500 2.500 0 0 1 4.500 2h11A2.500 2.500 0 0 1 18 4.500v7a2.500 2.500 0 0 1-2.500 2.500H8l-4 4v-4a2 2 0 0 1-2-2z" /><path d="M6.300 8h.1M10 8h.1M13.700 8h.1" strokeWidth="2.400" /></Stroke>
            </button>
          </div>
          <div className="flex w-[13px] shrink-0 flex-col items-center bg-[#fbfbfb] py-1 text-[#8a8a8a]">
            <Caret className="h-2 w-[10px] shrink-0 rotate-180" />
            <div className="flex w-full flex-1 flex-col items-center">
              <div className="flex-[203]" />
              <div className="w-[7px] flex-[317] rounded-full bg-[#8a8a8a]" />
              <div className="flex-[228]" />
            </div>
            <Caret className="h-2 w-[10px] shrink-0" />
          </div>
        </div>
        <div className="flex h-[13px] shrink-0 items-center bg-[#fbfbfb] pl-0.5 pr-[13px] text-[#8a8a8a]">
          <Caret className="h-2 w-[10px] rotate-90" />
          <div className="flex flex-1">
            <div className="flex-[267]" />
            <div className="h-[7px] flex-[681] rounded-full bg-[#8a8a8a]" />
            <div className="flex-[289]" />
          </div>
          <Caret className="h-2 w-[10px] -rotate-90" />
        </div>
      </div>
    </div>
  </main>
);

/* ---------- format panel ---------- */

const swatches = [
  "bg-[#b5100c]",
  "bg-[conic-gradient(#ccc_25%,#fff_0_50%,#ccc_0_75%,#fff_0)] bg-[length:11px_11px]",
  "bg-[#0a58d0]", "bg-[#5227ad]", "bg-white",
  "bg-[conic-gradient(#ccc_25%,#fff_0_50%,#ccc_0_75%,#fff_0)] bg-[length:11px_11px]",
  "bg-[#ececec]", "bg-[#bfbfbf]", "bg-[#989898]", "bg-[#666666]", "bg-[#5f5f5f]", "bg-[#434343]", "bg-[#222222]", "bg-black",
];

const field = "rounded border border-[#cdd0d7] bg-white";
const title = "text-[15px] font-bold leading-5 text-[#3d4653]";
const link = "block text-base leading-5 text-[#1271f5]";
const select = "w-0 min-w-0 flex-1 appearance-none bg-transparent outline-none";

const DropCaret = () => (
  <span className="pointer-events-none flex h-[18px] w-[26px] shrink-0 items-center justify-center border-l border-[#dcdfe5]"><Caret className="h-2 w-[10px] text-[#818b94]" /></span>
);

const FormatPanel = () => (
  <aside className="relative w-[312px] shrink-0 border-l border-[#dcdfe5] bg-[#f7f9fb] text-[#3d4653]">
    <section className="border-b border-[#dcdfe5] pb-[15px] pl-4 pr-4 pt-[11px]">
      <h2 className={title}>Page Settings</h2>
      <label className={`${field} mt-[10px] flex h-11 items-center pl-1.5 pr-[10px]`}>
        <Stroke className="h-[18px] w-[15px] shrink-0 text-[#818b94]" box="0 0 15 18" w={1.600}><path d="M3 1h6.500L14 5.500V15a2 2 0 0 1-2 2H3a2 2 0 0 1-2-2V3a2 2 0 0 1 2-2z" /><path d="M8 8.500h2.500V11M7 13.500H4.500V11" /></Stroke>
        <select aria-label="Page size" className={`${select} ml-2 text-base`}><option>Custom</option></select>
        <Caret className="h-2 w-[10px] shrink-0 text-[#818b94]" />
      </label>
      <div className="mt-2 flex items-center">
        <div className="flex flex-col gap-2">
          <label className={`${field} flex h-[33px] w-[108px] items-center pl-1.5`}>
            <Stroke className="h-[14px] w-[15px] shrink-0 text-[#818b94]" box="0 0 15 14" w={1.700}><path d="M1 7h13M4 4 1 7l3 3M11 4l3 3-3 3" /></Stroke>
            <input aria-label="Page width" defaultValue="877" className="ml-1.5 w-20 bg-transparent text-base outline-none" />
          </label>
          <label className={`${field} flex h-[33px] w-[108px] items-center pl-1.5`}>
            <Stroke className="h-[15px] w-[15px] shrink-0 text-[#818b94]" box="0 0 15 15" w={1.700}><path d="M7.500 1v13M4.500 4l3-3 3 3M4.500 11l3 3 3-3" /></Stroke>
            <input aria-label="Page height" defaultValue="1495" className="ml-1.5 w-20 bg-transparent text-base outline-none" />
          </label>
        </div>
        <button aria-label="Link width and height" className="flex h-[74px] flex-col items-center py-4">
          <svg viewBox="0 0 28 44" className="h-11 w-7" fill="none" aria-hidden="true">
            <path d="M0 .5h14q4 0 4 4V7M0 42h14q3 0 4-2" stroke="#cdd0d7" />
            <path d="M14.500 22v-4a3.500 3.500 0 0 1 6.500-2" stroke="#818b94" strokeWidth="1.600" />
            <rect x="11.800" y="21.800" width="12.400" height="9.400" rx="1" stroke="#818b94" strokeWidth="1.600" />
            <path d="M18 25v3" stroke="#818b94" strokeWidth="1.800" />
          </svg>
        </button>
        <div className="ml-auto flex flex-col gap-2">
          <div className={`${field} flex h-[33px] w-[112px] overflow-hidden`}>
            <button aria-label="Portrait" className="flex flex-1 items-center justify-center border-r border-[#cdd0d7]"><span className="h-5 w-3 rounded-xs border-2 border-[#1271f5]" /></button>
            <button aria-label="Landscape" className="flex flex-1 items-center justify-center bg-[#f7f9fb]"><span className="h-3 w-5 rounded-xs border-2 border-[#465567]" /></button>
          </div>
          <label className={`${field} flex h-[33px] w-[112px] items-center pl-[7px] pr-1`}>
            <Solid className="h-[15px] w-4 shrink-0 text-[#818b94]" box="0 0 16 15"><path d="M5 1 3.800 2 5.200 3.500.500 8c-.5.500-.5 1 0 1.500l4.200 4c.5.500 1 .5 1.500 0L11.500 8.500zM6 4.500 9.300 8H2.500zM13.800 10s-1.600 2-1.600 3.200a1.600 1.600 0 0 0 3.200 0c0-1.200-1.600-3.200-1.600-3.200z" fillRule="evenodd" /></Solid>
            <input type="button" aria-label="Page fill color" className="ml-2 h-[22px] min-w-0 flex-1 rounded-xs border border-[#cdd0d7] bg-white" />
          </label>
        </div>
      </div>
      <a href="#fit" className={`${link} mt-[13px]`}>Fit page to content...</a>
      <a href="#reset" className={`${link} mt-4`}>Reset page view</a>
      <label className="mt-[15px] flex items-center gap-[7px] text-base leading-5 text-[#818b94]">
        <input type="checkbox" className="h-[15px] w-[15px] accent-[#1271f5]" />
        Hide content outside page
      </label>
    </section>

    <section className="border-b border-[#dcdfe5] pb-[19px] pl-4 pr-4 pt-[11px]">
      <h2 className={title}>Default Text Settings</h2>
      <div className="mt-[11px] flex gap-2">
        <label className={`${field} flex h-8 w-[173px] shrink-0 items-center pl-[7px]`}>
          <select aria-label="Font family" className={`${select} text-base text-[#87919c]`}><option>Font family</option></select><DropCaret />
        </label>
        <label className={`${field} flex h-8 min-w-0 flex-1 items-center pl-[6px]`}>
          <select aria-label="Text style" className={`${select} text-[13px]`}><option>None</option></select><DropCaret />
        </label>
      </div>
      <div className="mt-2 flex gap-2">
        <label className={`${field} flex h-[33px] w-[135px] shrink-0 items-center pl-2 pr-1`}>
          <Stroke className="h-[14px] w-[14px] shrink-0 text-[#818b94]" box="0 0 14 14" w={1.900}><path d="M1.500 13 7 1l5.500 12M3.500 9h7" /></Stroke>
          <input type="button" aria-label="Text color" value="?" className="ml-2 h-[23px] min-w-0 flex-1 rounded-xs border border-[#cdd0d7] bg-[#f5f6f9] text-[13px] font-bold text-[#818b94]" />
        </label>
        <label className={`${field} flex h-[33px] min-w-0 flex-1 items-center pl-2`}>
          <Stroke className="h-[14px] w-[18px] shrink-0 text-[#818b94]" box="0 0 18 14" w={1.900}><path d="M7 3V1h10v2M12 1v12M10 13h4M1 8V6.500h5V8M3.500 6.500V13" /></Stroke>
          <input aria-label="Text size" className="w-0 min-w-0 flex-1 bg-transparent outline-none" />
          <span className="mr-1.5 text-xs text-[#c5c9cf]">PX</span><DropCaret />
        </label>
      </div>
      <a href="#defaults" className={`${link} mt-[10px]`}>Reset defaults</a>
    </section>

    <section className="pl-4 pr-4 pt-[11px]">
      <h2 className={title}>Replace Colors</h2>
      <div className="mt-[11px] flex h-9 rounded-md border-2 border-[#dddde3] bg-[#ebeaf0]">
        <button className="w-[134px] rounded bg-white text-base text-[#1271f5] shadow">Current Page</button>
        <button className="flex-1 text-base text-[#818b94]">Entire Project</button>
      </div>
      <div className="mt-[22px] flex justify-between text-base leading-5">
        {["Fills", "Strokes", "Text Color"].map((name) => (
          <label key={name} className="flex items-center gap-2"><input type="checkbox" defaultChecked className="h-[15px] w-[15px] accent-[#1271f5]" />{name}</label>
        ))}
      </div>
      <div className="mt-[23px] flex flex-wrap gap-x-[7px] gap-y-1.5">
        {swatches.map((c, i) => (
          <button key={i} aria-label={`Color ${i + 1}`} className={`h-[22px] w-[22px] rounded-xs border border-black/15 bg-origin-border ${c}`} />
        ))}
      </div>
      <p className="mt-[21px] rounded-lg bg-white px-[15px] py-3 text-[15px] leading-[21px] text-[#87919c]">Click on any color above to replace it on the current page</p>
    </section>

    <button aria-label="Assistant" className="absolute bottom-9 right-0 flex h-[46px] w-[50px] items-center rounded-l-full bg-white pl-[13px] shadow-[0_0_40px_rgba(0,0,0,0.14)]">
      <svg viewBox="0 0 24 24" className="h-6 w-6" aria-hidden="true">
        <linearGradient id="brain" x1="0" y1=".2" x2="1" y2=".7"><stop stopColor="#ff8a2b" /><stop offset=".25" stopColor="#e832c0" /><stop offset=".6" stopColor="#7a4df0" /><stop offset="1" stopColor="#1f9bff" /></linearGradient>
        <path d="M11.300 2.500C9.500.5 6 1.200 5.500 3.500 3 3.800 2 6 2.800 8 .500 9.500.300 13 2.300 14.500c-.8 2.500.7 4.800 3 5 .8 3 4.500 3.500 6 1.500zM12.700 2.500c1.800-2 5.300-1.300 5.800 1 2.500.3 3.500 2.500 2.700 4.500 2.300 1.500 2.500 5 .5 6.500.8 2.500-.7 4.800-3 5-.8 3-4.500 3.500-6 1.500z" fill="url(#brain)" />
        <path d="M11 8H8.500L7 6M3 12h8M11 18H8l-1.500-2M15 6l2 2h2M14 13l3-1 2 2M15 18l2-2h2" stroke="#fff" strokeWidth=".9" fill="none" strokeLinecap="round" />
      </svg>
    </button>
  </aside>
);

/* ---------- taskbar ---------- */

const ChromeLogo = () => (
  <svg viewBox="0 0 30 30" className="h-[30px] w-[30px]" aria-hidden="true">
    <circle cx="15" cy="15" r="15" fill="#fbc116" />
    <path d="M2 7.500a15 15 0 0 1 26 0H15z" fill="#e63b2e" />
    <path d="M2 7.500A15 15 0 0 0 15 30l6.500-11.200L15 15 8.500 18.800z" fill="#2da94f" />
    <path d="M2 7.500h13v7.500l-6.500 3.800z" fill="#e63b2e" />
    <path d="M2 7.500 8.500 18.800 15 22.500v7.500A15 15 0 0 1 2 7.500z" fill="#2da94f" />
    <circle cx="15" cy="15" r="7.500" fill="#fff" />
    <circle cx="15" cy="15" r="6" fill="#3b7ded" />
  </svg>
);

const taskIcons = [
  ["Task view", <svg viewBox="0 0 30 30" className="h-[30px] w-[30px]" aria-hidden="true"><rect x="8" y="1" width="22" height="20" rx="1.500" fill="#f2f2f2" /><rect x="0" y="9" width="22" height="20" rx="1.500" fill="#666" /><path d="M8 9h14v12H8z" fill="#b4b4b4" /></svg>],
  ["Copilot", <svg viewBox="0 0 30 30" className="h-[30px] w-[30px]" aria-hidden="true">
    <linearGradient id="cpa" x1="0" y1="0" x2=".3" y2="1"><stop stopColor="#1d8be0" /><stop offset=".5" stopColor="#39b8a0" /><stop offset="1" stopColor="#f5d02b" /></linearGradient>
    <linearGradient id="cpb" x1=".7" y1="0" x2="0" y2="1"><stop stopColor="#a15cf0" /><stop offset=".5" stopColor="#f0609a" /><stop offset="1" stopColor="#ffa04d" /></linearGradient>
    <path d="M8 3h11L13 19c-.6 2-1.500 3-3.500 3H4c-3 0-4-2-3.200-5L4 6.500C4.800 4.200 6 3 8 3z" fill="url(#cpa)" />
    <path d="M13 3h5.500c2.500 0 3.200 1.200 3.800 3.500L23 9h-5c-1.500 0-2 .5-2.500 2z" fill="#1550b8" />
    <path d="M22 27.500H12l5.500-16c.6-1.700 1.500-2.500 3.200-2.500H25c3 0 4.300 2 3.400 5L25.500 24c-.7 2.400-1.700 3.500-3.500 3.500z" fill="url(#cpb)" />
    <path d="M17.500 27.500H12c-2.500 0-3.300-1.500-4-4L7.500 22h3c1.500 0 2.200-.7 2.600-2z" fill="#ef4a3a" />
  </svg>],
  ["Teams", <svg viewBox="0 0 36 36" className="h-9 w-9" aria-hidden="true"><circle cx="18" cy="12" r="4.500" fill="#7b83eb" /><path d="M19 14h12v10a6 6 0 0 1-9 5z" fill="#5059c9" /><path d="M11 16h15v10a7.500 7.500 0 0 1-15 1z" fill="#7b83eb" /><rect x="3" y="14" width="15" height="15" rx="1.500" fill="#4b53bc" /><path d="M7 18h7M10.500 18v7.500" stroke="#fff" strokeWidth="1.800" /><circle cx="28.500" cy="10" r="9.500" fill="#d83b01" /><path d="M28.500 5v6.500" stroke="#fff" strokeWidth="2.400" strokeLinecap="round" /><circle cx="28.500" cy="15" r="1.500" fill="#fff" /></svg>],
  ["Firefox", <svg viewBox="0 0 30 30" className="h-[30px] w-[30px]" aria-hidden="true">
    <linearGradient id="ffx" x1=".8" y1="0" x2=".2" y2="1"><stop stopColor="#fff04d" /><stop offset=".45" stopColor="#ff9220" /><stop offset="1" stopColor="#f5216a" /></linearGradient>
    <path d="M17.500 0c4 2.500 4 6 6 7.500 1-.5 1-1.500 1-2.500C28 9 30 13.500 28.500 18.500 26.500 25 21 29 15 29 7.500 29 1.500 23 1.500 15.500 1.500 12 3 7.500 5 5.500l1.500 3.500c1.500-1.300 3-1.700 5-1.500C12.500 5 15.500 3 17.500 0z" fill="url(#ffx)" />
    <circle cx="15.500" cy="16" r="6.500" fill="#8a3fe0" /><path d="M6 10c3-1.500 5 0 7 1l3.500.5C16 13.500 13 14 12 15.500c0 3 4 4 6.500 2.500-1 3.500-5 4.500-8 3-3-1.500-5-6-4.500-11z" fill="#ff7a29" />
  </svg>],
  ["Edge", <svg viewBox="0 0 30 30" className="h-[30px] w-[30px]" aria-hidden="true">
    <linearGradient id="edg" x1="0" y1=".3" x2="1" y2=".4"><stop stopColor="#2aa6e8" /><stop offset=".55" stopColor="#35c1d8" /><stop offset="1" stopColor="#6be05a" /></linearGradient>
    <path d="M0 14c0 10 6 16 15 16 5.500 0 10-2.500 12.500-6.500-5 2-12-1-12-7.500 0-2 1-3.300 1.800-4L8 8z" fill="#1580d0" />
    <path d="M9.500 13c-4 5-1.500 14.500 5.500 17 5.500 0 10-2.500 12.500-6.500-5 2-12-.5-12-6 0-2 .7-3.500 1.800-4.500-2.300-1.800-6-1.500-7.800 0z" fill="#0d4a98" />
    <path d="M0 14C.5 6 7 0 15 0c9 0 15 6 15 12.500 0 5-3.500 7.500-7.500 7.500-3 0-4.700-.8-4.700-2 0-1 1.500-1.800 1.500-4 0-3.500-4-6-8.300-6C6 8 1.500 10 0 14z" fill="url(#edg)" />
  </svg>, "dot"],
  ["Chrome", <ChromeLogo />],
  ["File Explorer", <svg viewBox="0 0 30 30" className="h-[30px] w-[30px]" aria-hidden="true"><path d="M0 4a1.500 1.500 0 0 1 1.500-1.500h8L13 6h15.500A1.500 1.500 0 0 1 30 7.500V11H0z" fill="#e0a21a" /><path d="M0 9h11l2.500-3H30v22H0z" fill="#fdcb40" /><path d="M5 28.500V23a2 2 0 0 1 2-2h16a2 2 0 0 1 2 2v5.500z" fill="#1d84d6" /><path d="M9 25h12" stroke="#0d4f9c" strokeWidth="1.800" strokeLinecap="round" /></svg>, "dot"],
  ["Chrome, profile N", <ChromeLogo />, "active"],
  ["Word", <svg viewBox="0 0 28 28" className="h-7 w-7" aria-hidden="true"><rect x="14" y="5" width="13" height="18" fill="#fff" /><path d="M17 8h8M17 11h8M17 14h8M17 17h8M17 20h8" stroke="#2b579a" strokeWidth="1.200" /><path d="M1 4 17 1v26L1 24z" fill="#2b579a" /><path d="m4 9.500 2 9L9 10.500l3 8 2-9" stroke="#fff" strokeWidth="1.700" fill="none" /></svg>, "dot"],
];

const Taskbar = () => (
  <footer className="flex h-[60px] shrink-0 border-t border-[#3a3c3e] bg-[#1c1c1c] font-['Open_Sans','Noto_Sans',sans-serif] text-white">
    <div className="flex w-[545px] shrink-0 items-start pl-[27px] pt-[7px]">
      <svg viewBox="0 0 32 38" className="h-[38px] w-8" aria-hidden="true">
        <linearGradient id="sun" x1="0" y1="0" x2="1" y2="1"><stop stopColor="#f7c52d" /><stop offset="1" stopColor="#f2660f" /></linearGradient>
        <linearGradient id="cld" x1="0" y1="0" x2="0" y2="1"><stop stopColor="#a9c5f2" /><stop offset="1" stopColor="#dfeafd" /></linearGradient>
        <circle cx="13" cy="21" r="12" fill="url(#sun)" />
        <path d="M8 37a6 6 0 0 1 0-11.500 8 8 0 0 1 14.500 0A5.800 5.800 0 0 1 24 37z" fill="url(#cld)" />
        <circle cx="21.500" cy="10" r="10" fill="#ff8f9a" />
        <text x="21.500" y="15" textAnchor="middle" fontSize="14" fill="#222">4</text>
      </svg>
      <div className="ml-[5px] text-sm leading-5">
        <p className="pt-0.5">28°C</p>
        <p className="text-[#c4c4c4]">Partly sunny</p>
      </div>
    </div>
    <button aria-label="Start" className="ml-[13px] flex items-center">
      <span className="grid h-[29px] w-[29px] grid-cols-2 gap-px">
        <span className="bg-[#72d8fb]" /><span className="bg-[#5accfa]" /><span className="bg-[#42c0fa]" /><span className="bg-[#1ba5f8]" />
      </span>
    </button>
    <label className="ml-4 mt-[9px] flex h-10 w-[275px] items-center rounded-full border border-[#505050] bg-[#3b3b3b] pl-[14px]">
      <Stroke className="h-[18px] w-[18px] shrink-0" box="0 0 18 18" w={1.800}><circle cx="7.500" cy="7.500" r="6" /><path d="m12 12 5 5" /></Stroke>
      <input aria-label="Search Windows" placeholder="Search" className="ml-[13px] w-48 bg-transparent text-base outline-none placeholder:text-[#d2d2d2]" />
    </label>
    <div className="ml-[3px] flex">
      {taskIcons.map(([name, icon, state]) => (
        <button key={name} aria-label={name} className="flex w-[55px] justify-center pt-1">
          <span className={`relative flex h-[50px] w-[49px] items-center justify-center rounded ${state === "active" ? "border border-[#333] bg-[#2a2a2a]" : ""}`}>
            {icon}
            {state === "active" && <span className="absolute right-1 top-[3px] flex h-5 w-5 items-center justify-center rounded-full bg-[#2c6a1c] text-[11px]">N</span>}
            {state === "active" && <span className="absolute bottom-0 h-1 w-5 rounded-full bg-[#4cc2ff]" />}
            {state === "dot" && <span className="absolute bottom-0 h-1 w-2 rounded-full bg-[#9a9a9a]" />}
          </span>
        </button>
      ))}
    </div>
    <div className="ml-auto flex items-center pr-6 pb-0.5">
      <Stroke className="h-4 w-4" box="0 0 16 16" w={1.700}><path d="m2 11 6-6 6 6" /></Stroke>
      <svg viewBox="0 0 22 18" className="ml-[22px] h-[18px] w-[22px]" aria-hidden="true"><path d="M5 16a4.500 4.500 0 0 1 0-9 6.500 6.500 0 0 1 12 0 4.500 4.500 0 0 1 .5 9z" fill="#858585" /><path d="m3 1 17 16" stroke="#1c1c1c" strokeWidth="3" /><path d="m3 1 17 16" stroke="#ddd" strokeWidth="1.300" /></svg>
      <Stroke className="ml-[19px] h-4 w-5" box="0 0 20 16" w={1.400}><rect x="1" y="1" width="18" height="14" rx="2" /><path d="M5 5h.1M8.300 5h.1M11.600 5h.1M15 5h.1M5 8h.1M8.300 8h.1M11.600 8h.1M15 8h.1M6.500 11.500h7" strokeWidth="1.800" /></Stroke>
      <Stroke className="ml-5 h-4 w-5" box="0 0 20 16" w={1.500}><rect x="1" y="1" width="18" height="14" rx="2" /><path d="M1 10h18M10 10v5" /></Stroke>
      <Stroke className="ml-5 h-4 w-5" box="0 0 20 16" w={1.600}><path d="M1 6a13 13 0 0 1 18 0M4 9.200a8.500 8.500 0 0 1 12 0M7 12.200a4.300 4.300 0 0 1 6 0" /><circle cx="10" cy="14" r=".8" fill="currentColor" /></Stroke>
      <Stroke className="ml-[10px] h-4 w-5" box="0 0 20 16" w={1.400}><path d="M1 5.500h3L8.500 2v12L4 10.500H1zM11.500 5.500a3.500 3.500 0 0 1 0 5M14 3.300a6.700 6.700 0 0 1 0 9.400M16.500 1a10 10 0 0 1 0 14" /></Stroke>
      <svg viewBox="0 0 21 18" className="ml-[10px] h-[18px] w-[21px]" fill="none" aria-hidden="true"><rect x="2" y="5" width="15" height="11" rx="2.500" stroke="#fff" strokeWidth="1.500" /><rect x="5" y="7.500" width="9.500" height="6" fill="#fff" /><path d="M18.500 8.500v4" stroke="#fff" strokeWidth="2" strokeLinecap="round" /><path d="M5 0 .5 7H4l-1 5 5-7H5z" fill="#fff" stroke="#1c1c1c" /></svg>
      <div className="ml-[22px] text-right text-sm leading-5">
        <p>5:06 PM</p>
        <p>5/29/2025</p>
      </div>
    </div>
  </footer>
);

export default function App() {
  return (
    <div className="flex h-screen flex-col overflow-hidden font-['Liberation_Sans',Arial,sans-serif]">
      <div className="h-[7px] shrink-0 bg-[#383b34]" />
      <Header />
      <div className="flex min-h-0 flex-1">
        <LeftNav />
        <StencilPanel />
        <Canvas />
        <FormatPanel />
      </div>
      <Taskbar />
    </div>
  );
}
